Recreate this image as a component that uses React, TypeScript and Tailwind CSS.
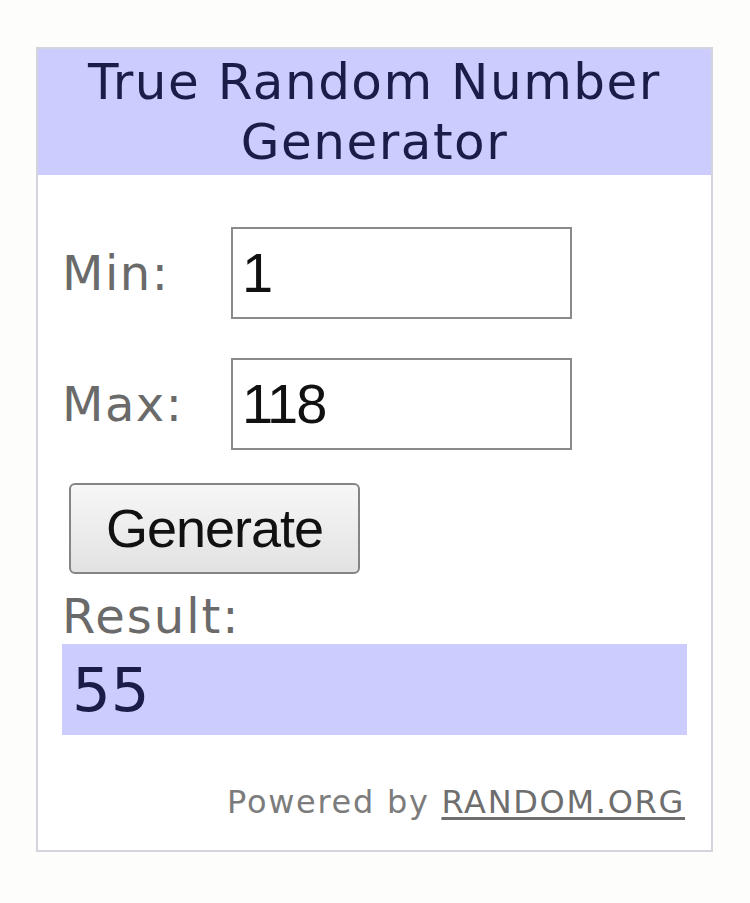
const Field = ({ label, value }: { label: string; value: string }) => (
  <div className="flex items-center">
    <span className="w-[169px] text-[48px] tracking-[1.5px] leading-none text-[#6a6a6a] font-['DejaVu_Sans',sans-serif]">{label}</span>
    <div className="w-[341px] h-[92px] border-2 border-[#8a8a8a] bg-white flex items-center pl-[9px]">
      <span className="text-[56px] tracking-[-2px] leading-none text-[#111] font-['Liberation_Sans',Arial,sans-serif]">{value}</span>
    </div>
  </div>
)

export default function App() {
  return (
    <div className="w-[750px] h-[903px] bg-[#fdfdfb] pt-[47px] pl-[36px]">
      <div className="w-[677px] h-[805px] border-2 border-[#d4d4dc] bg-white flex flex-col">
        <div className="h-[126px] bg-[#ccccff] flex items-center justify-center text-center">
          <p className="text-[50px] tracking-[1.5px] leading-[60px] text-[#1c1c48] font-['DejaVu_Sans',Verdana,sans-serif]">
            True Random Number
            <br />
            Generator
          </p>
        </div>
        <div className="flex flex-col pl-[24px] pr-[24px]">
          <div className="mt-[52px] flex flex-col gap-[39px]">
            <Field label="Min:" value="1" />
            <Field label="Max:" value="118" />
          </div>
          <button className="mt-[33px] ml-[7px] w-[291px] h-[91px] rounded-[6px] border-2 border-[#858585] bg-gradient-to-b from-[#f7f7f7] to-[#e2e2e2] text-[54px] tracking-[-1px] text-[#111] font-['Liberation_Sans',Arial,sans-serif]">
            Generate
          </button>
          <p className="mt-[14px] text-[48px] tracking-[2px] leading-[56px] text-[#6a6a6a] font-['DejaVu_Sans',Verdana,sans-serif]">Result:</p>
          <div className="h-[91px] bg-[#ccccff] flex items-center pl-[10px]">
            <span className="text-[61px] leading-none text-[#1c1c48] font-['DejaVu_Sans',Verdana,sans-serif]">55</span>
          </div>
          <p className="mt-[43px] text-right pr-[2px] text-[32px] tracking-[1.7px] text-[#7c7c7c] font-['DejaVu_Sans',Verdana,sans-serif]">
            Powered by <a className="underline underline-offset-4 text-[#6e6e6e]">RANDOM.ORG</a>
          </p>
        </div>
      </div>
    </div>
  )
}
